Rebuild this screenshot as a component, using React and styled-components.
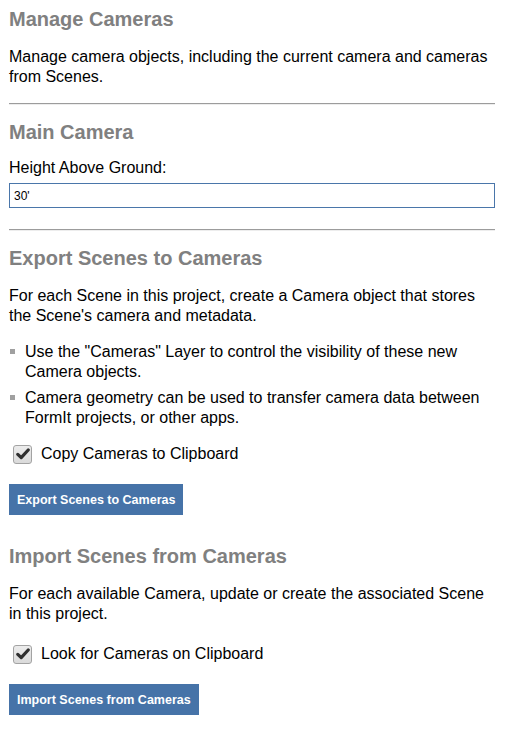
import React from 'react';
import styled, { createGlobalStyle } from 'styled-components';

const GlobalStyle = createGlobalStyle`
	body {
		margin: 0;
		background: #ffffff;
		font-family: 'Liberation Sans', Arial, sans-serif;
		color: #000000;
	}
`;

const Panel = styled.div`
	width: 486px;
	padding: 8px 10px 14px 9px;
`;

const Section = styled.section`
	display: flex;
	flex-direction: column;
	align-items: flex-start;
	margin-bottom: ${({ $gap }) => $gap || 0}px;
`;

const Title = styled.h2`
	margin: 0 0 ${({ $after }) => ($after === undefined ? 16 : $after)}px;
	font-size: 20px;
	line-height: 23px;
	font-weight: 700;
	color: #808080;
`;

const Text = styled.p`
	margin: 0 0 16px;
	font-size: 16px;
	line-height: 20px;
`;

const Divider = styled.hr`
	width: 100%;
	margin: 0 0 16px;
	border: 0;
	border-top: 1px solid #9c9c9c;
	border-bottom: 1px solid #ededed;
`;

const Label = styled.label`
	display: block;
	margin-bottom: 5px;
	font-size: 16px;
	line-height: 20px;
`;

const Input = styled.input`
	box-sizing: border-box;
	width: 100%;
	height: 25px;
	margin: 0 0 21px;
	padding: 0 4px;
	border: 1px solid #4a76aa;
	font-family: 'Liberation Sans', Arial, sans-serif;
	font-size: 12px;
	color: #000;
	outline: none;
`;

const List = styled.ul`
	display: flex;
	flex-direction: column;
	gap: 6px;
	margin: 0 0 16px;
	padding: 0;
	list-style: none;
`;

const Item = styled.li`
	position: relative;
	padding-left: 16px;
	font-size: 16px;
	line-height: 20px;

	&::before {
		content: '';
		position: absolute;
		left: 1px;
		top: 7px;
		width: 5px;
		height: 5px;
		background: #a0a0a0;
	}
`;

const CheckRow = styled.label`
	display: flex;
	align-items: center;
	gap: 9px;
	margin: ${({ $lead }) => $lead || 0}px 0 20px 4px;
	font-size: 16px;
	line-height: 20px;
	cursor: pointer;
`;

const Box = styled.span`
	display: flex;
	align-items: center;
	justify-content: center;
	box-sizing: border-box;
	width: 19px;
	height: 19px;
	border: 1px solid #a3a3a3;
	border-radius: 3px;
	background: linear-gradient(#ececec, #dadada);
`;

const Button = styled.button`
	height: 31px;
	padding: 0 8px;
	border: 0;
	background: #4673a8;
	color: #ffffff;
	font-family: 'Liberation Sans', Arial, sans-serif;
	font-size: 12.5px;
	font-weight: 700;
	cursor: pointer;
`;

const Check = ({ label, lead }) => (
	<CheckRow $lead={lead}>
		<Box>
			<svg width="14" height="12" viewBox="0 0 14 12">
				<path d="M1.8 6.4 L5.2 9.6 L12.2 2" fill="none" stroke="#2f2f2f" strokeWidth="3.2" strokeLinejoin="round" strokeLinecap="round" />
			</svg>
		</Box>
		{label}
	</CheckRow>
);

const App = () => (
	<>
		<GlobalStyle />
		<Panel>
			<Title>Manage Cameras</Title>
			<Text>Manage camera objects, including the current camera and cameras from Scenes.</Text>
			<Divider />

			<Title $after={14}>Main Camera</Title>
			<Label htmlFor="height">Height Above Ground:</Label>
			<Input id="height" defaultValue="30'" />
			<Divider />

			<Section $gap={30}>
				<Title>Export Scenes to Cameras</Title>
				<Text>For each Scene in this project, create a Camera object that stores the Scene's camera and metadata.</Text>
				<List>
					<Item>Use the "Cameras" Layer to control the visibility of these new Camera objects.</Item>
					<Item>Camera geometry can be used to transfer camera data between FormIt projects, or other apps.</Item>
				</List>
				<Check label="Copy Cameras to Clipboard" />
				<Button>Export Scenes to Cameras</Button>
			</Section>

			<Section>
				<Title>Import Scenes from Cameras</Title>
				<Text>For each available Camera, update or create the associated Scene in this project.</Text>
				<Check label="Look for Cameras on Clipboard" lead={4} />
				<Button>Import Scenes from Cameras</Button>
			</Section>
		</Panel>
	</>
);

export default App;
